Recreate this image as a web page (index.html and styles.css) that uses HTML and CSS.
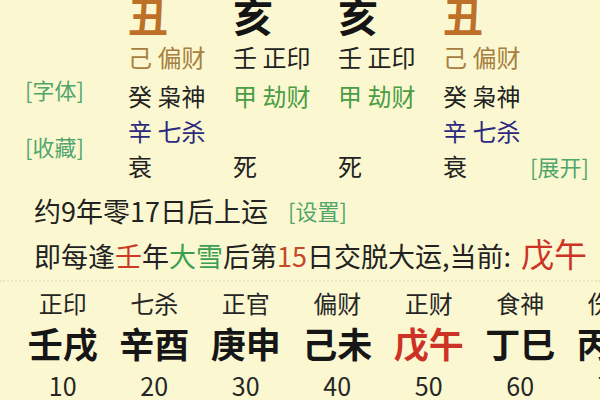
FILE: index.html
```html
<!DOCTYPE html>
<html lang="zh">
<head>
<meta charset="utf-8">
<link rel="stylesheet" href="styles.css">
</head>
<body>
<div class="page">
  <div class="chart">
    <div class="side">
      <span class="link">[字体]</span>
      <span class="link">[收藏]</span>
    </div>
    <div class="cell c1 r0 big brown">丑</div>
    <div class="cell c2 r0 big">亥</div>
    <div class="cell c3 r0 big">亥</div>
    <div class="cell c4 r0 big brown">丑</div>

    <div class="cell c1 r1 olive">己 偏财</div>
    <div class="cell c2 r1">壬 正印</div>
    <div class="cell c3 r1">壬 正印</div>
    <div class="cell c4 r1 olive">己 偏财</div>

    <div class="cell c1 r2">癸 枭神</div>
    <div class="cell c2 r2 green">甲 劫财</div>
    <div class="cell c3 r2 green">甲 劫财</div>
    <div class="cell c4 r2">癸 枭神</div>

    <div class="cell c1 r3 navy">辛 七杀</div>
    <div class="cell c4 r3 navy">辛 七杀</div>

    <div class="cell c1 r4">衰</div>
    <div class="cell c2 r4">死</div>
    <div class="cell c3 r4">死</div>
    <div class="cell c4 r4">衰</div>
    <div class="cell c5 r4 link">[展开]</div>
  </div>

  <div class="line line1">约9年零17日后上运 <span class="link small">[设置]</span></div>
  <div class="line line2">即每逢<span class="red">壬</span>年<span class="grn">大雪</span>后第<span class="red2">15</span>日交脱大运,当前: <span class="cur">戊午</span></div>

  <div class="dayun">
    <div class="col"><span class="god">正印</span><span class="gz">壬戌</span><span class="age">10</span></div>
    <div class="col"><span class="god">七杀</span><span class="gz">辛酉</span><span class="age">20</span></div>
    <div class="col"><span class="god">正官</span><span class="gz">庚申</span><span class="age">30</span></div>
    <div class="col"><span class="god">偏财</span><span class="gz">己未</span><span class="age">40</span></div>
    <div class="col"><span class="god">正财</span><span class="gz cur">戊午</span><span class="age">50</span></div>
    <div class="col"><span class="god">食神</span><span class="gz">丁巳</span><span class="age">60</span></div>
    <div class="col"><span class="god">伤官</span><span class="gz">丙辰</span><span class="age">70</span></div>
  </div>
</div>
</body>
</html>
```

FILE: styles.css
```css
html, body {
  margin: 0;
  padding: 0;
  background: #fbf8d1;
  overflow: hidden;
}
body {
  width: 600px;
  height: 400px;
  font-family: "Noto Sans CJK SC", "Noto Sans", sans-serif;
  color: #222222;
}
.page {
  width: 600px;
  height: 400px;
  overflow: hidden;
}
.chart {
  display: grid;
  grid-template-columns: 128px 105px 105px 105px 87px 1fr;
  grid-template-rows: 40px 44px 34px 36px 34px;
  margin-top: -5px;
  font-size: 24px;
}
.cell {
  display: flex;
  align-items: center;
  white-space: nowrap;
  line-height: 1;
}
.c1 { grid-column: 2; }
.c2 { grid-column: 3; }
.c3 { grid-column: 4; }
.c4 { grid-column: 5; }
.c5 { grid-column: 6; }
.r0 { grid-row: 1; }
.r1 { grid-row: 2; }
.r2 { grid-row: 3; }
.r3 { grid-row: 4; }
.r4 { grid-row: 5; }
.big {
  font-size: 40px;
  font-weight: 700;
  color: #141414;
}
.brown { color: #bd7028; }
.olive { color: #a67f40; }
.green { color: #4a9d44; }
.navy { color: #2c2a7e; }
.side {
  grid-column: 1;
  grid-row: 2 / 6;
  display: flex;
  flex-direction: column;
  align-items: flex-start;
  padding-left: 25px;
  padding-top: 42px;
  gap: 33px;
}
.link {
  color: #52a66c;
  font-size: 22px;
  line-height: 24px;
}
.line {
  font-size: 27px;
  line-height: 40px;
  padding-left: 34px;
  white-space: nowrap;
}
.line1 { margin-top: 8px; }
.line2 { margin-top: 2px; }
.small {
  font-size: 22px;
  margin-left: 14px;
  vertical-align: 2px;
}
.red { color: #cc3b25; }
.grn { color: #3c9e52; }
.red2 { color: #c6482a; }
.cur { color: #cc3226; }
.line2 .cur { font-size: 33px; margin-left: 4px; }
.dayun {
  display: grid;
  grid-template-columns: repeat(7, 91.5px);
  padding-left: 17px;
  margin-top: 4px;
  padding-top: 3px;
  border-top: 2px dotted #ebe7c4;
}
.col {
  display: flex;
  flex-direction: column;
  align-items: center;
  white-space: nowrap;
}
.god {
  font-size: 24px;
  line-height: 36px;
  color: #262626;
}
.gz {
  font-size: 35px;
  font-weight: 700;
  line-height: 44px;
  margin-top: 0;
  color: #161616;
}
.gz.cur { color: #cc3226; }
.age {
  font-size: 25px;
  line-height: 38px;
  margin-top: 1px;
  color: #262626;
}
```
